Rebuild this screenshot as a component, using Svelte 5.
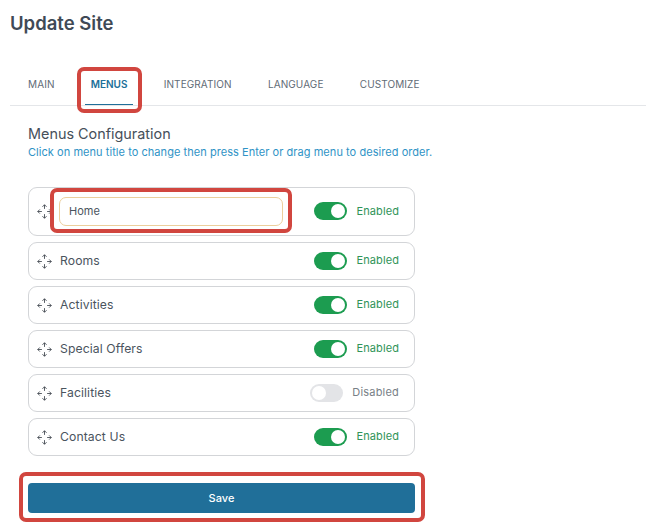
<script>
  const rows = [
    { name: 'Rooms', on: true },
    { name: 'Activities', on: true },
    { name: 'Special Offers', on: true },
    { name: 'Facilities', on: false },
    { name: 'Contact Us', on: true }
  ];
  const tabs = ['MAIN', 'MENUS', 'INTEGRATION', 'LANGUAGE', 'CUSTOMIZE'];
</script>

{#snippet move()}
  <svg class="move" width="15" height="15" viewBox="0 0 16 16" fill="none" stroke="#3a414a" stroke-width="0.9">
    <path d="M8 .8v4.4M8 10.8v4.4M.8 8h4.4M10.8 8h4.4" />
    <path d="M5.8 3 8 .8 10.2 3M5.8 13 8 15.2 10.2 13M3 5.8.8 8 3 10.2M13 5.8 15.2 8 13 10.2" />
  </svg>
{/snippet}

{#snippet status(on)}
  <div class="toggle" class:on><span class="knob"></span></div>
  <span class="label" class:on>{on ? 'Enabled' : 'Disabled'}</span>
{/snippet}

<div class="page">
  <h1>Update Site</h1>
  <nav class="tabs">
    {#each tabs as t}
      <div class="tab" class:active={t === 'MENUS'}>{t}</div>
    {/each}
    <div class="mark mark-tab"></div>
  </nav>
  <section class="panel">
    <h2>Menus Configuration</h2>
    <p>Click on menu title to change then press Enter or drag menu to desired order.</p>
    <div class="list">
      <div class="row first">
        {@render move()}
        <div class="field">Home</div>
        {@render status(true)}
        <div class="mark mark-home"></div>
      </div>
      {#each rows as r}
        <div class="row">
          {@render move()}
          <span class="name">{r.name}</span>
          {@render status(r.on)}
        </div>
      {/each}
    </div>
    <div class="save-wrap">
      <button class="save">Save</button>
      <div class="mark mark-save"></div>
    </div>
  </section>
</div>

<style>
  :global(body) {
    margin: 0;
    background: #fff;
    font-family: Inter, "Open Sans", sans-serif;
  }
  .page {
    width: 646px;
    height: 532px;
    overflow: hidden;
    padding: 13px 0 0 10px;
    box-sizing: border-box;
  }
  h1 {
    margin: 0;
    font-size: 18.5px;
    line-height: 20px;
    font-weight: 600;
    color: #3f4a56;
  }
  .tabs {
    position: relative;
    display: flex;
    margin-top: 30px;
    height: 42px;
    padding-left: 12px;
    border-bottom: 1px solid #e4e6e9;
    box-sizing: content-box;
  }
  .tab {
    padding: 0 6px;
    margin-right: 24.2px;
    font-size: 10px;
    letter-spacing: 0.1px;
    line-height: 42px;
    height: 42px;
    font-weight: 400;
    color: #5f6b76;
    box-sizing: border-box;
    white-space: nowrap;
  }
  .tab.active {
    color: #206f99;
    font-weight: 600;
    letter-spacing: 0;
    border-bottom: 1px solid #206f99;
  }
  .panel {
    padding: 19px 0 0 18px;
    width: 387px;
  }
  h2 {
    margin: 0;
    font-size: 14.4px;
    line-height: 17px;
    font-weight: 400;
    color: #46505a;
  }
  p {
    margin: 3px 0 0;
    font-size: 11px;
    line-height: 14px;
    letter-spacing: 0.05px;
    color: #2f93c6;
    white-space: nowrap;
  }
  .list {
    display: flex;
    flex-direction: column;
    gap: 6px;
    margin-top: 28px;
  }
  .row {
    position: relative;
    display: flex;
    align-items: center;
    height: 38px;
    box-sizing: border-box;
    border: 1px solid #d3d5d8;
    border-radius: 9px;
    padding: 0 15px 0 8px;
  }
  .row.first {
    height: 49px;
    padding-bottom: 1px;
  }
  .move {
    flex: none;
  }
  .name {
    margin: 0 0 2px 8px;
    font-size: 12.2px;
    letter-spacing: 0.1px;
    font-weight: 400;
    color: #4a545e;
  }
  .field {
    margin: 1px 0 0 7px;
    width: 224px;
    height: 29px;
    flex: none;
    box-sizing: border-box;
    border: 1px solid #eccf9c;
    border-radius: 7px;
    padding-left: 9px;
    line-height: 27px;
    font-size: 11px;
    font-weight: 400;
    color: #4a545e;
  }
  .toggle {
    position: relative;
    width: 33px;
    height: 18px;
    border-radius: 9px;
    background: #e3e4e7;
    flex: none;
    margin-left: auto;
  }
  .toggle.on {
    background: #1c9c50;
  }
  .knob {
    position: absolute;
    top: 2px;
    left: 2px;
    width: 14px;
    height: 14px;
    border-radius: 50%;
    background: #fff;
  }
  .toggle.on .knob {
    left: 17px;
  }
  .label {
    margin: 0 0 2px 9px;
    font-size: 11px;
    letter-spacing: 0.2px;
    color: #787f87;
    white-space: nowrap;
  }
  .label.on {
    letter-spacing: 0.1px;
    color: #2f9458;
  }
  .first .label {
    margin-bottom: 0;
  }
  .save-wrap {
    position: relative;
    margin-top: 27px;
  }
  .save {
    display: block;
    width: 387px;
    height: 30px;
    border: 0;
    border-radius: 4px;
    background: #206f99;
    color: #fff;
    font: 500 11px Inter, sans-serif;
    padding: 0 0 1px;
  }
  .mark {
    position: absolute;
    border: 4px solid #d1463f;
    border-radius: 7px;
    box-sizing: border-box;
    pointer-events: none;
  }
  .mark-tab {
    left: 67px;
    top: 4px;
    width: 65px;
    height: 46px;
  }
  .mark-home {
    left: 21px;
    top: 0;
    width: 242px;
    height: 45px;
  }
  .mark-save {
    left: -9px;
    top: -11px;
    width: 406px;
    height: 50px;
  }
</style>
